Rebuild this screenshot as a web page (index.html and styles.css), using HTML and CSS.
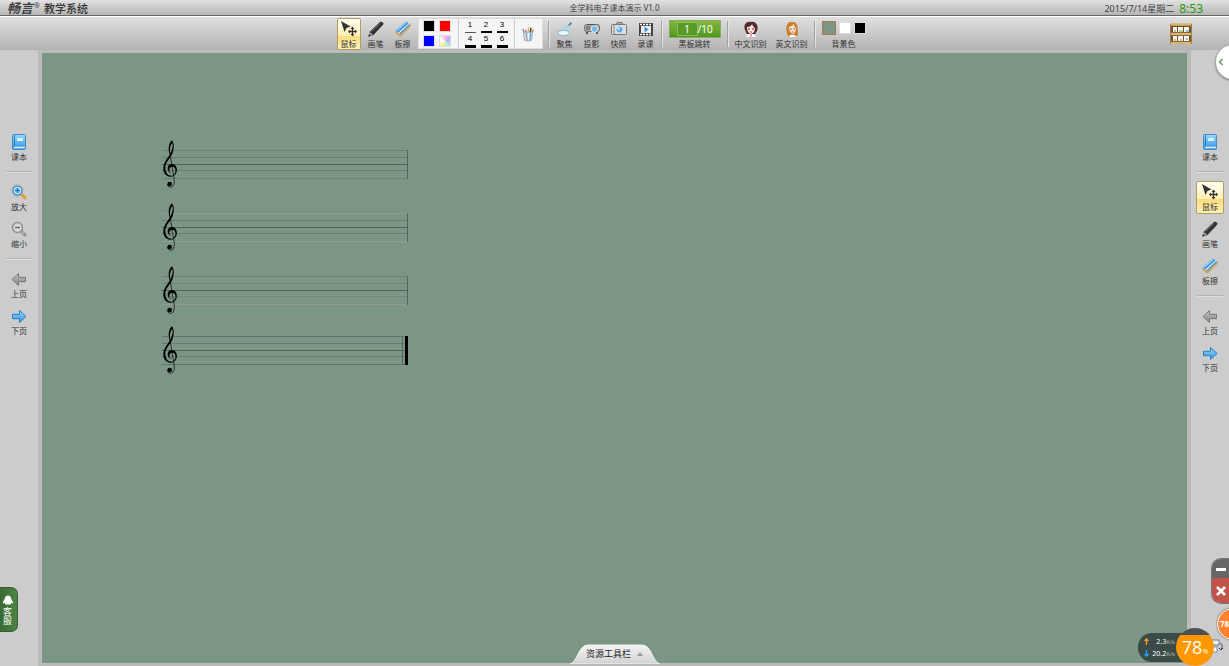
FILE: index.html
```html
<!DOCTYPE html>
<html lang="zh-CN">
<head>
<meta charset="utf-8">
<title>全学科电子课本演示</title>
<link rel="stylesheet" href="styles.css">
</head>
<body>
<svg class="defs" aria-hidden="true">
  <defs>
    <linearGradient id="blue" x1="0" y1="0" x2="0" y2="1"><stop offset="0" stop-color="#9bd8fb"/><stop offset="1" stop-color="#2f93e0"/></linearGradient>
    <linearGradient id="grey" x1="0" y1="0" x2="0" y2="1"><stop offset="0" stop-color="#c4c4c4"/><stop offset="1" stop-color="#858585"/></linearGradient>
    <linearGradient id="tab" x1="0" y1="0" x2="0" y2="1"><stop offset="0" stop-color="#f4f4f4"/><stop offset="1" stop-color="#d2d2d2"/></linearGradient>
    <symbol id="mouse" viewBox="0 0 16 16">
      <path d="M0 0L9.500 5.500L5.500 7L3.500 11Z" fill="#333"/>
      <path d="M11.500 5.500L13.500 8H12.200V9.800H14V8.500L16 10.500L14 12.500V11.200H12.200V13H13.500L11.500 15.500L9.500 13H10.800V11.200H9V12.500L7 10.500L9 8.500V9.800H10.800V8H9.500Z" fill="#333"/>
    </symbol>
    <symbol id="pen" viewBox="0 0 16 16">
      <path d="M.500 15.500L2 10.500L12.500 .500Q15 .500 15.700 3L5.500 14Z" fill="#303030"/>
      <path d="M3.500 10.500L12.500 2" stroke="#777" stroke-width="1"/><path d="M.500 15.500L2 11L5 13.500Z" fill="#999"/><path d="M.300 15.700L1 13.500L2.500 14.800Z" fill="#111"/>
    </symbol>
    <symbol id="eraser" viewBox="0 0 16 16">
      <path d="M.500 9.500L11 .500L15.500 4L5.500 13.500Z" fill="#3f92d6"/>
      <path d="M1 9L11 .500L12.300 1.500L2.300 10.300Z" fill="#8cc9f0"/><path d="M3.300 11.500L13.500 2.500L14.300 3.100L4.300 12.400Z" fill="#e8eef2"/>
      <path d="M.500 10L5.500 13.500L15.500 4V6L5.500 16L.500 12Z" fill="#dca253"/>
    </symbol>
    <symbol id="book" viewBox="0 0 16 16">
      <rect x="1.500" y=".500" width="13" height="15" rx="1" fill="url(#blue)" stroke="#3f8fc6"/>
      <path d="M3.500 1V13" stroke="#287fc4"/><path d="M3 13.500H14" stroke="#d8effb" stroke-width="1.500"/><rect x="6" y="4" width="6" height="3" fill="#d8effb"/>
    </symbol>
    <symbol id="zoom-in" viewBox="0 0 16 16">
      <path d="M10 10L14 14" stroke="#e59c2b" stroke-width="3" stroke-linecap="round"/>
      <circle cx="6.500" cy="6.500" r="4.500" fill="#b7e1fa" stroke="#4e94cc" stroke-width="1.500"/><circle cx="6.500" cy="6.500" r="5.700" fill="none" stroke="#aaa" stroke-width=".800"/><path d="M4 6.500H9M6.500 4V9" stroke="#1974bd" stroke-width="1.500"/>
    </symbol>
    <symbol id="zoom-out" viewBox="0 0 16 16">
      <path d="M10 10L14 14" stroke="#888" stroke-width="3" stroke-linecap="round"/><path d="M10 10L13.500 13.500" stroke="#ddd"/>
      <circle cx="6.500" cy="6.500" r="5" fill="#d9d9d9" stroke="#909090" stroke-width="1.500"/><path d="M4 6.500H9" stroke="#666" stroke-width="1.500"/>
    </symbol>
    <symbol id="prev" viewBox="0 0 16 16"><path d="M1 8.500L7.500 2.500V6.300H14.500V10.700H7.500V14.500Z" fill="url(#grey)" stroke="#777"/></symbol>
    <symbol id="next" viewBox="0 0 16 16"><path d="M15 8.500L8.500 2.500V6.300H1.500V10.700H8.500V14.500Z" fill="url(#blue)" stroke="#2680c3"/></symbol>
    <symbol id="clef" viewBox="0 0 54 147">
      <path d="M26 42C20 26 24 8 33 1C40 10 40 26 34 41C29 54 15 64 13 80C12 97 21 107 32 107C42 106 47 92 41 83C35 77 26 81 25 89C25 94 28 98 32 100C22 98 18 88 21 79C27 68 44 70 47 84C50 101 40 111 28 110C14 109 6 97 7 83C9 64 22 53 27 42C34 30 37 18 34 10C28 14 26 26 28 42Z" fill="#000"/>
      <path d="M27 40L38 108C42 126 40 141 29 142C24 142 19 138 20 132" fill="none" stroke="#000" stroke-width="2"/><circle cx="26" cy="132" r="7"/>
    </symbol>
  </defs>
</svg>

<header class="titlebar">
  <div class="brand"><b class="brand-mark">畅言</b><sup class="brand-reg">®</sup><span class="brand-name">教学系统</span></div>
  <h1 class="title">全学科电子课本演示 V1.0</h1>
  <div class="clock"><span>2015/7/14星期二</span><time class="time">8:53</time></div>
</header>

<nav class="toolbar">
  <div class="tools">
    <button class="tool active"><svg class="icon"><use href="#mouse"/></svg>鼠标</button>
    <button class="tool"><svg class="icon"><use href="#pen"/></svg>画笔</button>
    <button class="tool"><svg class="icon"><use href="#eraser"/></svg>板擦</button>
    <div class="palette">
      <div class="colors">
        <button class="swatch black" aria-label="黑色"></button><button class="swatch red" aria-label="红色"></button>
        <button class="swatch blue" aria-label="蓝色"></button><button class="swatch rainbow" aria-label="更多颜色"></button>
      </div>
      <div class="widths">
        <button class="width w1">1</button><button class="width w2">2</button><button class="width w2">3</button>
        <button class="width w3">4</button><button class="width w3">5</button><button class="width w3">6</button>
      </div>
      <button class="brushes" aria-label="笔筒">
        <svg class="icon" viewBox="0 0 16 18"><path d="M4 8L2 3" stroke="#5f96c4" stroke-width="1.500"/><path d="M6 8L5.500 4" stroke="#dd5443" stroke-width="1.500"/><path d="M8.500 8V1" stroke="#e8b94a" stroke-width="1.500"/><path d="M10 8L11.500 2" stroke="#333" stroke-width="1.500"/><path d="M12 8L14 4" stroke="#cc6655" stroke-width="1.500"/><path d="M3 7H13L12 16Q8 18 4 16Z" fill="#c8dfef" stroke="#8ba9bf"/><path d="M6 8L7 16" stroke="#d46a5a"/><path d="M8.500 8V16" stroke="#fff"/><path d="M11 8L10 16" stroke="#4c8cc8"/></svg>
      </button>
    </div>
    <span class="rule"></span>
    <button class="tool"><svg class="icon" viewBox="0 0 16 16"><path d="M14 1L1 11Q3 15 11 13Z" fill="#a5d8ec" opacity=".8"/><ellipse cx="6.500" cy="12" rx="6" ry="2.500" fill="#e8faff" stroke="#8db2bf"/><path d="M11 4L13.500 1L15 2.500L12.500 5Z" fill="#55869b"/></svg>聚焦</button>
    <button class="tool"><svg class="icon" viewBox="0 0 16 16"><rect x=".500" y="3.500" width="15" height="7" rx="2" fill="#aaa" stroke="#777"/><path d="M3 3.500H11M2 6H6M2 8H6" stroke="#555"/><path d="M3 11V13M13 11V13" stroke="#555" stroke-width="2"/><circle cx="10.500" cy="8" r="3.300" fill="#72b9ed" stroke="#e6e6e6"/></svg>投影</button>
    <button class="tool"><svg class="icon" viewBox="0 0 16 16"><rect x=".500" y="3.500" width="15" height="10" rx="1" fill="#ddd" stroke="#777"/><path d="M5 3L6 1.500H11L12 3" fill="#aaa" stroke="#777"/><path d="M3 4V13" stroke="#888"/><circle cx="8.500" cy="8.500" r="3.700" fill="#64afe9" stroke="#eee"/><circle cx="7.500" cy="7.500" r="1.300" fill="#cfeaff"/></svg>快照</button>
    <button class="tool"><svg class="icon" viewBox="0 0 16 16"><rect x="1" y="2" width="14" height="13" fill="#444"/><path d="M2 3.500H14M2 13.500H14" stroke="#fff" stroke-width="1.500" stroke-dasharray="2 1"/><rect x="3" y="5" width="10" height="7" fill="#eee"/><path d="M6.500 5.500L10.500 8.500L6.500 11.500Z" fill="#3595df"/></svg>录课</button>
    <span class="rule"></span>
    <div class="jump">
      <div class="pager"><input class="page" id="page" value="1"><span>/10</span></div>
      <label for="page">黑板跳转</label>
    </div>
    <span class="rule"></span>
    <button class="tool wide"><svg class="icon" viewBox="0 0 16 16"><path d="M2 9C0 3 4 0 8 1C13 0 16 5 14 10L12 13H4Z" fill="#572630"/><path d="M4 6Q8 6 9 3Q10 6 12 7Q12 12 8 13Q4 12 4 6Z" fill="#fce4d8"/><path d="M5 8H7M9 8H11" stroke="#5b312d"/><path d="M7 11H9" stroke="#c43d42"/><path d="M3 16Q4 13 7 13L8 14L9 13Q12 13 13 16Z" fill="#fff"/><path d="M8 13V16" stroke="#d24b56"/></svg>中文识别</button>
    <button class="tool wide"><svg class="icon" viewBox="0 0 16 16"><path d="M3 13C1 4 4 0 9 1C14 1 14 6 14 14L11 16H5Z" fill="#ca802e"/><path d="M5 6Q9 5 10 3Q10 6 12 7Q12 12 8.500 13Q5 11 5 6Z" fill="#fce4d1"/><path d="M6 8H7.500M9.500 8H11" stroke="#563629"/><path d="M7.500 11H9.500" stroke="#c44c42"/><path d="M5 16Q6 13 8.500 14Q11 13 12 16Z" fill="#fff"/></svg>英文识别</button>
    <span class="rule"></span>
    <div class="backdrop">
      <div class="backdrop-row"><button class="swatch green" aria-label="绿色"></button><button class="swatch white" aria-label="白色"></button><button class="swatch black" aria-label="黑色背景"></button></div>
      <span>背景色</span>
    </div>
  </div>
  <button class="shelf" aria-label="书架">
    <svg class="shelf-icon" viewBox="0 0 22 22"><rect x="1" y="1" width="20" height="19" fill="#72502d"/><path d="M0 1.500H22M0 11H22M0 20H22" stroke="#d9b573" stroke-width="2.500"/><path d="M.500 1V21M21.500 1V21" stroke="#a77b42"/><path d="M3 4H7V9H3ZM8 4H13V9H8ZM14 4H19V9H14ZM3 13H7V18H3ZM8 13H13V18H8ZM14 13H19V18H14Z" fill="#f4f4ef"/><path d="M4 8H6M9 8H13M4 17H6M10 17H12" stroke="#6aa543"/><path d="M16 8H19M16 16H18" stroke="#3c8bb5"/></svg>
  </button>
</nav>

<main class="workspace">
  <aside class="side">
    <button class="tool"><svg class="icon"><use href="#book"/></svg>课本</button>
    <hr class="line">
    <button class="tool"><svg class="icon"><use href="#zoom-in"/></svg>放大</button>
    <button class="tool"><svg class="icon"><use href="#zoom-out"/></svg>缩小</button>
    <hr class="line">
    <button class="tool"><svg class="icon"><use href="#prev"/></svg>上页</button>
    <button class="tool"><svg class="icon"><use href="#next"/></svg>下页</button>
  </aside>
  <section class="board">
    <svg class="staff" viewBox="0 0 248 49"><path d="M1 10.500H247M1 38.500H247" stroke="#737c78"/><path d="M1 17.500H247M1 30.500H247" stroke="#6e7773"/><path d="M1 24.500H247" stroke="#53615b"/><path d="M246.500 10V39" stroke="#59635e"/><use href="#clef" width="18" height="49"/></svg>
    <svg class="staff" viewBox="0 0 248 49"><path d="M1 10.500H247M1 38.500H247" stroke="#929b97"/><path d="M1 17.500H247M1 30.500H247" stroke="#6e7773"/><path d="M1 24.500H247" stroke="#53615b"/><path d="M246.500 10V39" stroke="#59635e"/><use href="#clef" width="18" height="49"/></svg>
    <svg class="staff" viewBox="0 0 248 49"><path d="M1 10.500H247" stroke="#737c78"/><path d="M1 38.500H247" stroke="#929b97"/><path d="M1 17.500H247M1 30.500H247" stroke="#76827c"/><path d="M1 24.500H247" stroke="#53615b"/><path d="M246.500 10V39" stroke="#59635e"/><use href="#clef" width="18" height="49"/></svg>
    <svg class="staff" viewBox="0 0 248 49"><path d="M1 10.500H247M1 38.500H247" stroke="#67716c"/><path d="M1 17.500H247M1 30.500H247" stroke="#6e7773"/><path d="M1 24.500H247" stroke="#53615b"/><path d="M241.500 10V39" stroke="#59635e"/><path d="M245.500 10V39" stroke="#000" stroke-width="3"/><use href="#clef" width="18" height="49"/></svg>
    <button class="drawer">
      <svg class="drawer-shape" viewBox="0 0 90 20" preserveAspectRatio="none"><path d="M0 20C8 18 8 1 18 1H72C82 1 82 18 90 20Z" fill="url(#tab)" stroke="#f2f2f2"/></svg>
      <span class="drawer-label">资源工具栏</span><span class="drawer-arrow"></span>
    </button>
  </section>
  <aside class="side">
    <button class="tool"><svg class="icon"><use href="#book"/></svg>课本</button>
    <hr class="line">
    <button class="tool active"><svg class="icon"><use href="#mouse"/></svg>鼠标</button>
    <button class="tool"><svg class="icon"><use href="#pen"/></svg>画笔</button>
    <button class="tool"><svg class="icon"><use href="#eraser"/></svg>板擦</button>
    <hr class="line">
    <button class="tool"><svg class="icon"><use href="#prev"/></svg>上页</button>
    <button class="tool"><svg class="icon"><use href="#next"/></svg>下页</button>
  </aside>
</main>

<button class="service"><svg class="penguin" viewBox="0 0 12 12"><path d="M2 5C2 -1 10 -1 10 5L12 8V10L10 9.500L9 11.500H3L2 9.500L0 10V8Z" fill="#fff"/></svg><span>客服</span></button>
<button class="expand" aria-label="展开"><svg class="chevron" viewBox="0 0 6 8"><path d="M4.500 1L1.500 4L4.500 7" fill="none" stroke="#4d8a3f" stroke-width="1.200"/></svg></button>
<div class="window-buttons">
  <button class="minimize" aria-label="最小化"><svg class="glyph" viewBox="0 0 10 10"><path d="M0 5.500H10" stroke="#fff" stroke-width="3"/></svg></button>
  <button class="close" aria-label="关闭"><svg class="glyph" viewBox="0 0 10 10"><path d="M1 1L9 9M9 1L1 9" stroke="#fff" stroke-width="2.500"/></svg></button>
</div>
<div class="ball">78</div>
<svg class="sync" viewBox="0 0 12 14"><rect x="0" y="1" width="7" height="5" fill="#eee" stroke="#5d7f9c"/><rect x="0" y="8" width="5" height="5" fill="#fff" stroke="#7690a8"/><path d="M8 4Q12 6 9 11M7 9L9 11L11 9" fill="none" stroke="#444"/></svg>
<div class="network">
  <div class="speed">
    <svg class="arrow" viewBox="0 0 5 7"><path d="M2.500 7V2M.500 3L2.500 1L4.500 3" fill="none" stroke="#ff9c1a" stroke-width="1.300"/></svg><span>2.3<small>K/s</small></span>
    <svg class="arrow" viewBox="0 0 5 7"><path d="M2.500 0V5M.500 4L2.500 6L4.500 4" fill="none" stroke="#1ea4ff" stroke-width="1.300"/></svg><span>20.2<small>K/s</small></span>
  </div>
  <div class="usage">78<small>%</small></div>
</div>
</body>
</html>
```
FILE: styles.css
```css
* { box-sizing: border-box; }
body {
  margin: 0;
  height: 100vh;
  display: flex;
  flex-direction: column;
  position: relative;
  overflow: hidden;
  background: #ccc;
  color: #333;
  font: 8px/10px "Noto Sans", "Noto Sans CJK SC", sans-serif;
}
button { margin: 0; padding: 0; border: 0; background: none; color: inherit; font: inherit; }
.defs { position: absolute; width: 0; height: 0; }
.icon { display: block; width: 16px; height: 16px; }

.titlebar {
  flex: none;
  display: grid;
  grid-template-columns: 1fr auto 1fr;
  align-items: center;
  height: 17px;
  padding: 0 26px 0 7px;
  background: linear-gradient(#e2e2e2, #b2b2b2);
  border-bottom: 1px solid #fff;
  box-shadow: inset 0 -1px #666;
}
.brand { display: flex; align-items: center; color: #444; }
.brand-mark { font-size: 13px; line-height: 15px; font-style: italic; }
.brand-reg { align-self: flex-start; width: 11px; padding-left: 1px; font-size: 7px; line-height: 9px; }
.brand-name { font-size: 11px; line-height: 15px; font-weight: 500; color: #333; }
.title { margin: 0 0 0 19px; font-size: 8px; font-weight: 400; line-height: 14px; color: #444; }
.clock { display: flex; justify-content: flex-end; align-items: center; gap: 5px; font-size: 9px; line-height: 15px; color: #444; }
.time { font-size: 12px; color: #2a9a0c; }

.toolbar {
  flex: none;
  display: grid;
  grid-template-columns: 1fr auto 1fr;
  align-items: center;
  height: 33px;
  padding-right: 37px;
  background: linear-gradient(#e0e0e0, #b3b3b3);
}
.tools { grid-column: 2; display: flex; align-items: center; gap: 3px; margin-left: 10px; }
.tool {
  display: flex;
  flex-direction: column;
  align-items: center;
  justify-content: flex-end;
  gap: 2px;
  width: 24px;
  height: 32px;
  border: 1px solid transparent;
  border-radius: 2px;
  white-space: nowrap;
}
.tool.wide { width: 38px; }
.tool.active { border-color: #b79a63; background: linear-gradient(#fffdf2, #fff0b5 55%, #fbdc7c 56%, #fff2b8); }
.palette { display: flex; height: 31px; margin: 0 2px 0 0; background: #f5f5f5; border: 1px solid #ddd; }
.colors { display: grid; grid-template-columns: 12px 12px; gap: 3px 4px; align-content: center; padding: 0 7px 0 4px; border-right: 1px solid #ccc; }
.swatch { width: 12px; height: 12px; border: 1px solid #ddd; }
.black { background: #000; }
.red { background: #f00; }
.blue { background: #00f; }
.white { background: #fff; }
.rainbow { background: conic-gradient(#fbb6ef, #b8a7ff, #a0f7cf, #fff28f, #fff, #fbb6ef); }
.widths { display: grid; grid-template-columns: repeat(3, 11px); gap: 2px 5px; align-content: center; padding: 0 6px; border-right: 1px solid #ccc; }
.width { height: 13px; padding-bottom: 1px; font: 8px/8px "Liberation Sans", sans-serif; color: #000; border-bottom: 1px solid #555; }
.w2 { border-bottom: 2px solid #000; }
.w3 { border-bottom: 3px solid #000; }
.brushes { width: 27px; display: grid; place-items: center; }
.rule { width: 2px; height: 26px; border-left: 1px solid #a3a3a3; border-right: 1px solid #e4e4e4; }
.jump { display: flex; flex-direction: column; align-items: center; gap: 1px; margin: 0 3px; padding-top: 2px; }
.pager {
  display: flex;
  align-items: center;
  width: 52px;
  height: 18px;
  padding-left: 7px;
  background: linear-gradient(#84b83e, #4f9522);
  border: 1px solid #8aac60;
  color: #fff;
  font-size: 10px;
}
.page { width: 21px; height: 14px; padding: 0; border: 1px solid #8bbd56; background: #589b27; color: #fff; font: inherit; text-align: center; }
.backdrop { display: flex; flex-direction: column; align-items: center; gap: 3px; margin-left: 3px; padding-top: 2px; }
.backdrop-row { display: flex; align-items: center; gap: 3px; height: 15px; }
.green { width: 14px; height: 14px; background: #7b9685; border: 1px solid #a77a4c; }
.shelf { justify-self: end; }
.shelf-icon { display: block; width: 22px; height: 22px; }

.workspace { flex: 1; min-height: 0; display: flex; background: #ccc; }
.side { flex: none; width: 38px; padding-top: 81px; display: flex; flex-direction: column; align-items: center; }
.side .tool { width: 28px; height: 33px; margin-bottom: 4px; padding-bottom: 1px; }
.line { width: 26px; height: 2px; margin: 3px 0 8px; border: 0; border-top: 1px solid #b3b3b3; border-bottom: 1px solid #ddd; }
.board {
  flex: 1;
  position: relative;
  padding: 87px 119px 0;
  background: #7b9685;
  border: solid #bababa;
  border-width: 3px 4px;
}
.staff { display: block; width: 248px; height: 49px; margin-bottom: 14px; }
.staff:nth-of-type(3) { margin-bottom: 11px; }
.drawer {
  position: absolute;
  left: 50%;
  bottom: -1px;
  transform: translateX(-50%);
  display: flex;
  align-items: center;
  justify-content: center;
  gap: 6px;
  width: 90px;
  height: 20px;
  font-size: 9px;
  color: #222;
}
.drawer-shape { position: absolute; inset: 0; width: 100%; height: 100%; }
.drawer-label, .drawer-arrow { position: relative; }
.drawer-arrow { border: 3px solid transparent; border-top: 0; border-bottom: 4px solid #999; }

.service {
  position: absolute;
  left: 0;
  top: 587px;
  width: 18px;
  height: 45px;
  padding: 4px 5px 4px 3px;
  background: linear-gradient(90deg, #3a6a35, #4d8446);
  border: 1px solid #345c30;
  border-left: 0;
  border-radius: 0 7px 7px 0;
  color: #fff;
  font-size: 9px;
  line-height: 9px;
}
.service span { display: block; width: 9px; }
.penguin { display: block; width: 10px; height: 12px; margin-bottom: 1px; }
.expand { position: absolute; right: -22px; top: 44px; width: 36px; height: 36px; padding-left: 2px; background: #fff; border: 1px solid #aaa; border-radius: 50%; box-shadow: 0 1px 2px #888; }
.chevron { display: block; width: 6px; height: 8px; }
.window-buttons { position: absolute; right: 0; top: 558px; width: 18px; height: 46px; display: grid; grid-template-rows: 19px 1fr; border: 1px solid #777; border-right: 0; border-radius: 10px 0 0 10px; overflow: hidden; }
.window-buttons button { display: grid; place-items: center; }
.minimize { background: #666; }
.close { background: #c25349; }
.glyph { width: 10px; height: 10px; }
.ball { position: absolute; right: -20px; top: 608px; width: 32px; height: 32px; padding-left: 2px; background: #ff812b; border: 1px solid #fff; border-radius: 50%; box-shadow: 0 0 2px #555; color: #fff; font-size: 8px; font-weight: 700; line-height: 30px; }
.sync { position: absolute; right: 5px; top: 639px; width: 12px; height: 14px; }
.network { position: absolute; right: 15px; bottom: 0; display: flex; align-items: flex-end; }
.speed {
  display: grid;
  grid-template-columns: 5px 1fr;
  align-content: center;
  align-items: center;
  gap: 2px 0;
  width: 58px;
  height: 29px;
  margin: 0 -20px 4px 0;
  padding: 0 21px 0 6px;
  background: #3b4b48;
  border-radius: 14px 0 0 14px;
  color: #fff;
  font: 7px/10px "Noto Sans", sans-serif;
}
.speed span { text-align: right; white-space: nowrap; }
.speed small { font-size: 6px; color: #bbb; }
.arrow { display: block; width: 5px; height: 7px; }
.usage { position: relative; display: flex; align-items: baseline; justify-content: center; width: 38px; height: 38px; background: linear-gradient(#4b5058 7px, #ff9800 7px); border-radius: 50%; color: #fff; font: 18px/38px "Open Sans", "Noto Sans", sans-serif; }
.usage small { font-size: 7px; line-height: 10px; }
```
